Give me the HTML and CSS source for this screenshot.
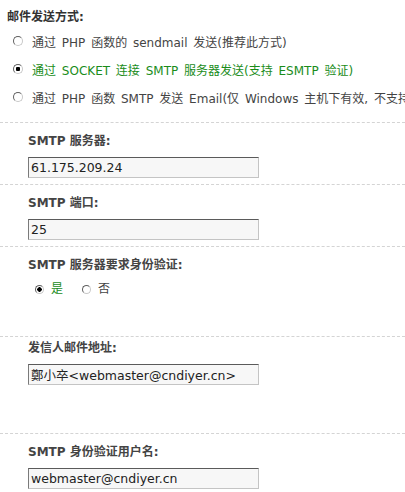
FILE: index.html
```html
<!DOCTYPE html>
<html lang="zh-CN">
<head>
  <meta charset="UTF-8">
  <title>邮件设置</title>
  <meta name="viewport" content="width=device-width, initial-scale=1.0">
  <link rel="stylesheet" href="styles.css">
</head>
<body>

  <div class="mail-mode">
    <p class="title">邮件发送方式:</p>
    <label class="option"><input type="radio" name="mode" value="1"> 通过 PHP 函数的 sendmail 发送(推荐此方式)</label>
    <label class="option checked"><input type="radio" name="mode" value="2" checked> 通过 SOCKET 连接 SMTP 服务器发送(支持 ESMTP 验证)</label>
    <label class="option"><input type="radio" name="mode" value="3"> 通过 PHP 函数 SMTP 发送 Email(仅 Windows 主机下有效, 不支持 ESMTP 验证)</label>
  </div>

  <div class="field">
    <p class="label">SMTP 服务器:</p>
    <input type="text" class="text" value="61.175.209.24">
  </div>

  <div class="field">
    <p class="label">SMTP 端口:</p>
    <input type="text" class="text" value="25">
  </div>

  <div class="field field-auth">
    <p class="label">SMTP 服务器要求身份验证:</p>
    <div class="yesno">
      <label class="checked"><input type="radio" name="auth" value="1" checked> 是</label>
      <label><input type="radio" name="auth" value="0"> 否</label>
    </div>
  </div>

  <div class="field field-from">
    <p class="label">发信人邮件地址:</p>
    <input type="text" class="text" value="鄭小卒&lt;webmaster@cndiyer.cn&gt;">
  </div>

  <div class="field">
    <p class="label">SMTP 身份验证用户名:</p>
    <input type="text" class="text" value="webmaster@cndiyer.cn">
  </div>

  <div class="bottom-bar"></div>

</body>
</html>
```

FILE: styles.css
```css
* {
  box-sizing: border-box;
}

html,
body {
  overflow: hidden;
}

body {
  margin: 0;
  font-family: "DejaVu Sans", "Noto Sans CJK SC", sans-serif;
  font-size: 12px;
  color: #444;
  background: #fff;
}

p {
  margin: 0;
}

.mail-mode {
  padding: 9px 0 11px 7px;
}

.title {
  line-height: 16px;
  font-weight: bold;
  color: #333;
  margin-bottom: 2px;
}

.option {
  display: flex;
  align-items: center;
  height: 28px;
  padding-left: 6px;
  white-space: nowrap;
  word-spacing: 2px;
}

.checked {
  color: #1a8c1a;
}

input[type="radio"] {
  appearance: none;
  -webkit-appearance: none;
  width: 10px;
  height: 10px;
  margin: 0 9px 0 0;
  border: 1px solid;
  border-color: #5f5f5f #c8c8c8 #c8c8c8 #5f5f5f;
  border-radius: 50%;
  background: #fff;
  flex-shrink: 0;
}

input[type="radio"]:checked {
  background: radial-gradient(circle, #000 0 2px, #fff 2.5px);
}

.field {
  border-top: 1px dashed #d4d4d4;
  padding: 10px 0 6px 28px;
}

.label {
  line-height: 16px;
  font-weight: bold;
  color: #444;
  margin-bottom: 8px;
}

.text {
  display: block;
  width: 231px;
  height: 21px;
  margin: 0;
  padding: 0 2px;
  border: 1px solid;
  border-color: #5a5a5a #c4c4c4 #c4c4c4 #7a7a7a;
  background: #f7f7f7;
  font-family: "DejaVu Sans", "Noto Sans CJK SC", sans-serif;
  font-size: 12.5px;
  color: #222;
}

.field-auth {
  padding-bottom: 37px;
}

.field-auth .label {
  margin-bottom: 6px;
}

.yesno {
  display: flex;
  gap: 19px;
  padding-left: 7px;
  line-height: 20px;
}

.yesno label {
  display: flex;
  align-items: center;
}

.yesno input[type="radio"] {
  width: 9px;
  height: 9px;
  margin-right: 7px;
}

.field-from {
  padding-top: 3px;
  padding-bottom: 48px;
}

.bottom-bar {
  height: 20px;
  background: #ebebeb;
}
```
